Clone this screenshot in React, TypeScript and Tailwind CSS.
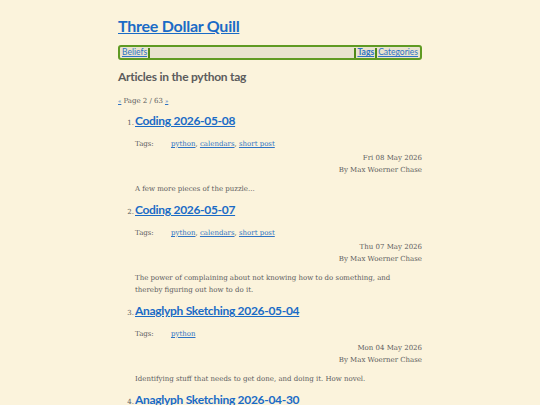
import React from "react";

const body = { fontFamily: '"DejaVu Serif", "Liberation Serif", serif' };
const head = { fontFamily: 'Lato, "Open Sans", sans-serif' };

type Item = { n: number; title: string; tags: string[]; date: string; summary: string };

const items: Item[] = [
  { n: 1, title: "Coding 2026-05-08", tags: ["python", "calendars", "short post"], date: "Fri 08 May 2026", summary: "A few more pieces of the puzzle..." },
  { n: 2, title: "Coding 2026-05-07", tags: ["python", "calendars", "short post"], date: "Thu 07 May 2026", summary: "The power of complaining about not knowing how to do something, and thereby figuring out how to do it." },
  { n: 3, title: "Anaglyph Sketching 2026-05-04", tags: ["python"], date: "Mon 04 May 2026", summary: "Identifying stuff that needs to get done, and doing it. How novel." },
  { n: 4, title: "Anaglyph Sketching 2026-04-30", tags: ["python"], date: "Thu 30 Apr 2026", summary: "More of the same." },
];

export default function App() {
  return (
    <div className="w-[540px] h-[405px] overflow-hidden bg-[#fbf3dc] text-[#5c5c5c]" style={body}>
      <div className="w-[304px] ml-[118px] pt-[14px]">
        <h1 className="text-[16px] leading-[24px] font-bold tracking-[-0.25px] text-[#1a6bc6] underline" style={head}>
          Three Dollar Quill
        </h1>
        <nav className="mt-[7px] h-[15px] rounded-[3px] border-2 border-[#5f9a23] bg-[#e9e3cf] flex items-center text-[8.5px] px-[1px]" style={head}>
          <a className="text-[#2e73c4] underline px-[1px]">Beliefs</a>
          <span className="w-[2px] h-[10px] bg-[#4f8a19]" />
          <span className="flex-1" />
          <span className="w-[2px] h-[10px] bg-[#4f8a19]" />
          <a className="text-[#2e73c4] font-bold underline px-[1px]">Tags</a>
          <span className="w-[2px] h-[10px] bg-[#4f8a19]" />
          <a className="text-[#2e73c4] underline px-[1px]">Categories</a>
        </nav>
        <h2 className="mt-[8px] text-[12px] leading-[18px] font-bold tracking-[-0.25px] text-[#5c5c5c]" style={head}>
          Articles in the python tag
        </h2>
        <div className="mt-[9px] text-[7px] leading-[12px] flex items-center gap-[2px]">
          <a className="text-[#2e73c4] underline text-[5.5px]">«</a>
          <span>Page 2 / 63</span>
          <a className="text-[#2e73c4] underline text-[5.5px]">»</a>
        </div>
        <ol className="mt-[5px]">
          {items.map((it) => (
            <li key={it.n} className="mb-[6px]">
              <div className="flex items-baseline">
                <span className="w-[17px] text-right pr-[1px] text-[7px] text-[#5c5c5c]">{it.n}.</span>
                <a className="text-[12px] leading-[18px] font-bold tracking-[-0.3px] text-[#1a6bc6] underline" style={head}>
                  {it.title}
                </a>
              </div>
              <div className="pl-[17px]">
                <div className="mt-[8px] flex text-[7px] leading-[12px]">
                  <span className="w-[36px]">Tags:</span>
                  <span>
                    {it.tags.map((t, i) => (
                      <React.Fragment key={t}>
                        <a className="text-[#2e73c4] underline">{t}</a>
                        {i < it.tags.length - 1 ? ", " : ""}
                      </React.Fragment>
                    ))}
                  </span>
                </div>
                <div className="mt-[2px] text-right text-[7px] leading-[12px]">
                  <div>{it.date}</div>
                  <div>By Max Woerner Chase</div>
                </div>
                <p className="mt-[7px] text-[7px] leading-[12px] pr-[20px]">{it.summary}</p>
              </div>
            </li>
          ))}
        </ol>
      </div>
    </div>
  );
}
